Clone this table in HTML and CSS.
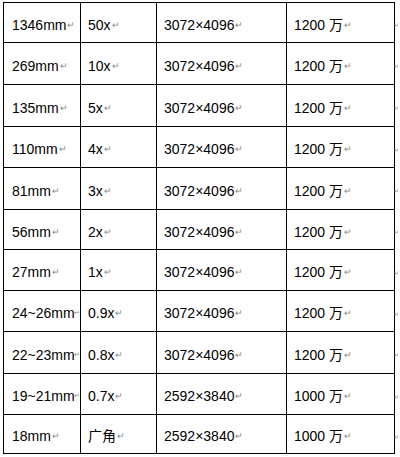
FILE: index.html
```html
<!DOCTYPE html>
<html>
<head>
<meta charset="utf-8">
<link rel="stylesheet" href="styles.css">
</head>
<body>
<div class="spec">
<div class="cell">1346mm<span class="pm">↵</span></div><div class="cell">50x<span class="pm">↵</span></div><div class="cell">3072×4096<span class="pm">↵</span></div><div class="cell">1200 万<span class="pm">↵</span></div><div class="end"><span class="pm">↵</span></div>
<div class="cell">269mm<span class="pm">↵</span></div><div class="cell">10x<span class="pm">↵</span></div><div class="cell">3072×4096<span class="pm">↵</span></div><div class="cell">1200 万<span class="pm">↵</span></div><div class="end"><span class="pm">↵</span></div>
<div class="cell">135mm<span class="pm">↵</span></div><div class="cell">5x<span class="pm">↵</span></div><div class="cell">3072×4096<span class="pm">↵</span></div><div class="cell">1200 万<span class="pm">↵</span></div><div class="end"><span class="pm">↵</span></div>
<div class="cell">110mm<span class="pm">↵</span></div><div class="cell">4x<span class="pm">↵</span></div><div class="cell">3072×4096<span class="pm">↵</span></div><div class="cell">1200 万<span class="pm">↵</span></div><div class="end"><span class="pm">↵</span></div>
<div class="cell">81mm<span class="pm">↵</span></div><div class="cell">3x<span class="pm">↵</span></div><div class="cell">3072×4096<span class="pm">↵</span></div><div class="cell">1200 万<span class="pm">↵</span></div><div class="end"><span class="pm">↵</span></div>
<div class="cell">56mm<span class="pm">↵</span></div><div class="cell">2x<span class="pm">↵</span></div><div class="cell">3072×4096<span class="pm">↵</span></div><div class="cell">1200 万<span class="pm">↵</span></div><div class="end"><span class="pm">↵</span></div>
<div class="cell">27mm<span class="pm">↵</span></div><div class="cell">1x<span class="pm">↵</span></div><div class="cell">3072×4096<span class="pm">↵</span></div><div class="cell">1200 万<span class="pm">↵</span></div><div class="end"><span class="pm">↵</span></div>
<div class="cell">24~26mm<span class="pm tight">↵</span></div><div class="cell">0.9x<span class="pm">↵</span></div><div class="cell">3072×4096<span class="pm">↵</span></div><div class="cell">1200 万<span class="pm">↵</span></div><div class="end"><span class="pm">↵</span></div>
<div class="cell">22~23mm<span class="pm tight">↵</span></div><div class="cell">0.8x<span class="pm">↵</span></div><div class="cell">3072×4096<span class="pm">↵</span></div><div class="cell">1200 万<span class="pm">↵</span></div><div class="end"><span class="pm">↵</span></div>
<div class="cell">19~21mm<span class="pm tight">↵</span></div><div class="cell">0.7x<span class="pm">↵</span></div><div class="cell">2592×3840<span class="pm">↵</span></div><div class="cell">1000 万<span class="pm">↵</span></div><div class="end"><span class="pm">↵</span></div>
<div class="cell">18mm<span class="pm">↵</span></div><div class="cell">广角<span class="pm">↵</span></div><div class="cell">2592×3840<span class="pm">↵</span></div><div class="cell">1000 万<span class="pm">↵</span></div><div class="end"><span class="pm">↵</span></div>
</div>
</body>
</html>
```

FILE: styles.css
```css
html, body {
  margin: 0;
  padding: 0;
  background: #fff;
  overflow: hidden;
}
body {
  padding: 2px 0 0 3px;
}
.spec {
  display: grid;
  grid-template-columns: 78px 76px 130px 108px 4px;
  grid-template-rows: 41px 42px 42px 41px 42px 40px 41px 41px 42px 41px 39px;
  width: 397px;
  font-family: "Liberation Sans", Arial, "Noto Sans CJK SC", sans-serif;
  font-size: 14px;
  color: #000;
  box-sizing: border-box;
}
.cell {
  box-sizing: border-box;
  border-right: 1px solid #000;
  border-bottom: 1px solid #000;
  padding: 4px 0 0 8px;
  display: flex;
  align-items: center;
  white-space: nowrap;
  overflow: hidden;
  line-height: 16px;
}
.cell:nth-child(5n+1) {
  border-left: 1px solid #000;
  padding-left: 8px;
}
.cell:nth-child(-n+4) {
  border-top: 1px solid #000;
}
.cell:nth-child(5n+2),
.cell:nth-child(5n+3),
.cell:nth-child(5n+4) {
  padding-left: 7px;
}
.end {
  display: flex;
  align-items: center;
  padding: 4px 0 0 0;
  line-height: 16px;
  white-space: nowrap;
}
.end .pm {
  font-size: 6px;
  margin-left: -1px;
}
.pm {
  font-size: 9px;
  color: #888;
  margin-left: 1px;
}
.pm.tight {
  font-size: 7px;
  margin-left: -1px;
}
```
